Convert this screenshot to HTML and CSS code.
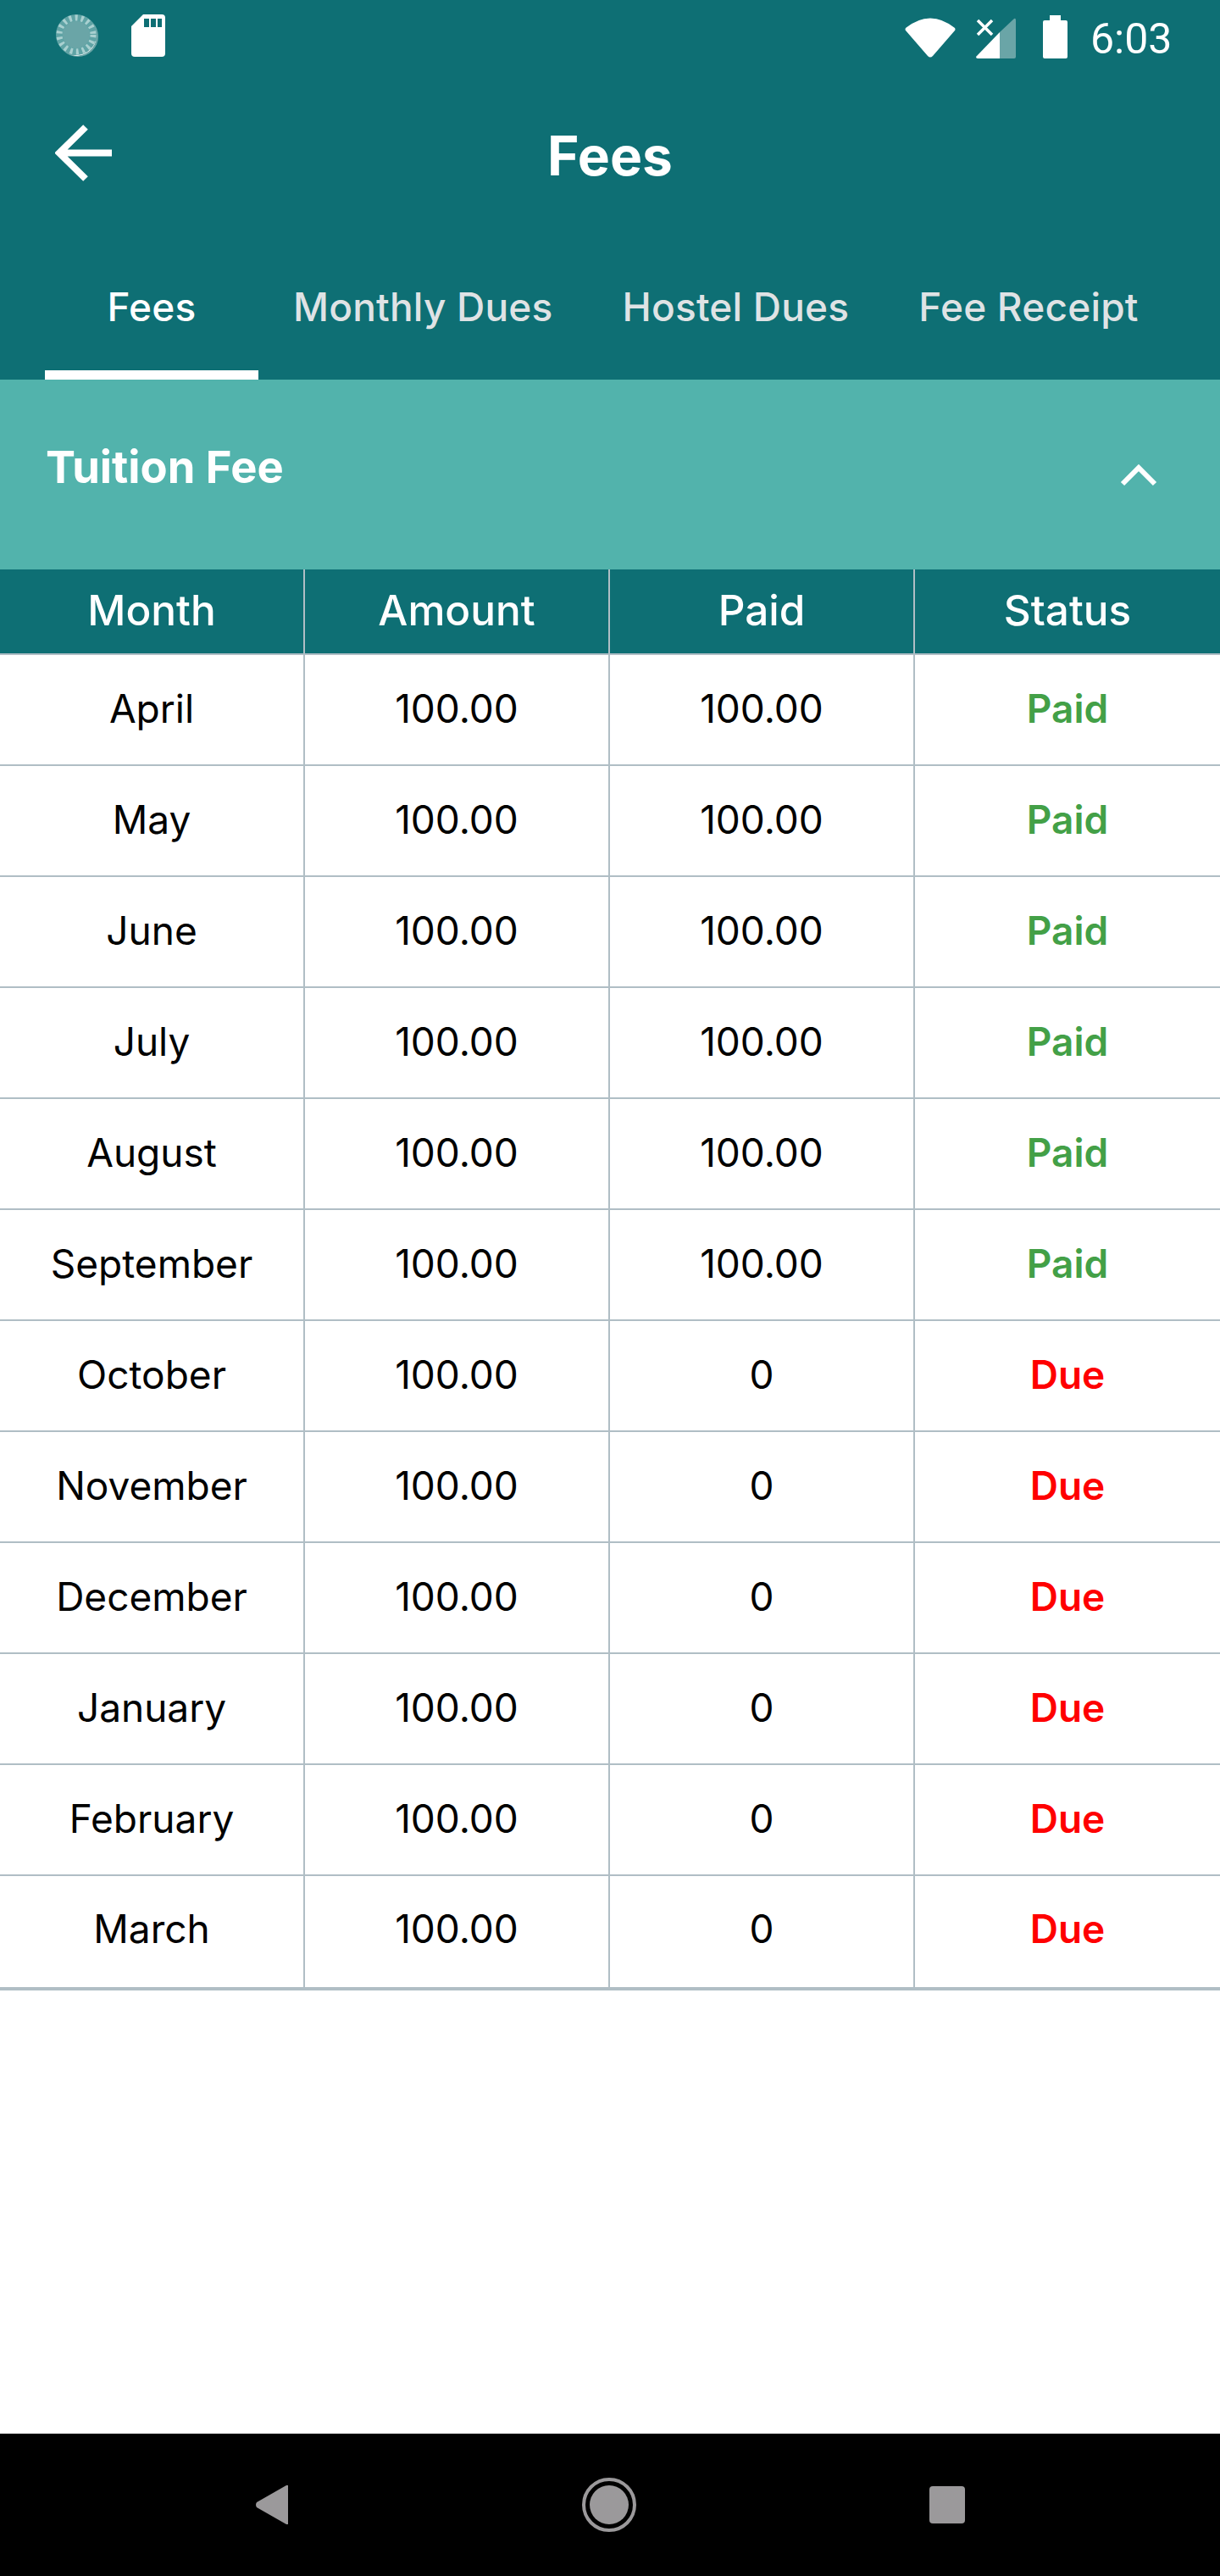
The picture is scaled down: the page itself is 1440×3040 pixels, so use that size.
FILE: index.html
```html
<!DOCTYPE html>
<html lang="en">
<head>
  <meta charset="UTF-8">
  <meta name="viewport" content="width=device-width, initial-scale=1.0">
  <title>Fees</title>
  <link rel="stylesheet" href="styles.css">
</head>
<body>
  <div class="screen">
    <header class="app-header">
      <!-- Status bar -->
      <div class="status-bar">
        <div class="status-left">
          <svg class="icon-sync" viewBox="0 0 50 52" width="50" height="52">
            <circle cx="26" cy="27" r="24" fill="#6aa5a7"/>
            <path d="M47 33 A24 24 0 0 1 18 49 A27 27 0 0 0 46 31 Z" fill="#ffffff"/>
            <circle cx="24" cy="25" r="24" fill="#5fa3a5"/>
            <circle cx="24" cy="25" r="20" fill="none" stroke="#a9d0d0" stroke-width="7" stroke-dasharray="3 4.1"/>
            <circle cx="24" cy="25" r="16" fill="#6aa5a7"/>
          </svg>
          <svg class="icon-sd" viewBox="0 0 40 52" width="40" height="52">
            <path d="M14 1 H36 Q40 1 40 5 V47 Q40 51 36 51 H4 Q0 51 0 47 V15 Z" fill="#ffffff"/>
            <path d="M15 6 h6 v10 h-6 z M23 6 h6 v10 h-6 z M31 6 h5 v10 h-5 z" fill="#0e6f74"/>
          </svg>
        </div>
        <div class="status-right">
          <svg class="icon-wifi" viewBox="0 0 60 52" width="60" height="52">
            <path d="M1 15 Q30 -8 59 15 Q60 17 59 18 L33 48 Q30 51 27 48 L1 18 Q0 17 1 15 Z" fill="#ffffff"/>
          </svg>
          <svg class="icon-signal" viewBox="0 0 47 52" width="47" height="52">
            <path d="M0 49 L28 20 V51 H2 Q0 51 0 49 Z" fill="#ffffff"/>
            <path d="M28 20 L45 4 Q47 3 47 6 V49 Q47 51 45 51 H28 Z" fill="#6aa5a7"/>
            <path d="M2 6 L19 23 M19 6 L2 23" stroke="#ffffff" stroke-width="3.5" fill="none"/>
          </svg>
          <svg class="icon-battery" viewBox="0 0 29 52" width="29" height="52">
            <path d="M8 0 H21 V6 H27 Q29 6 29 8 V49 Q29 51 27 51 H2 Q0 51 0 49 V8 Q0 6 2 6 H8 Z" fill="#ffffff"/>
          </svg>
          <span class="clock">6:03</span>
        </div>
      </div>

      <!-- Toolbar -->
      <div class="toolbar">
        <svg class="back-arrow" viewBox="0 0 68 68" width="68" height="68">
          <path d="M67 33.5 H6 M36 3 L5 33.5 L36 64" fill="none" stroke="#ffffff" stroke-width="8"/>
        </svg>
        <h1 class="toolbar-title">Fees</h1>
      </div>

      <nav class="tabs">
        <a class="tab tab-active">Fees</a>
        <a class="tab">Monthly Dues</a>
        <a class="tab">Hostel Dues</a>
        <a class="tab">Fee Receipt</a>
      </nav>
    </header>

    <div class="section-head">
      <h2>Tuition Fee</h2>
      <svg class="chevron" viewBox="0 0 44 28" width="44" height="28">
        <path d="M3 25 L22 6 L41 25" fill="none" stroke="#ffffff" stroke-width="6"/>
      </svg>
    </div>

    <table class="fee-table">
      <thead>
        <tr><th>Month</th><th>Amount</th><th>Paid</th><th>Status</th></tr>
      </thead>
      <tbody>
        <tr><td>April</td><td>100.00</td><td>100.00</td><td class="paid">Paid</td></tr>
        <tr><td>May</td><td>100.00</td><td>100.00</td><td class="paid">Paid</td></tr>
        <tr><td>June</td><td>100.00</td><td>100.00</td><td class="paid">Paid</td></tr>
        <tr><td>July</td><td>100.00</td><td>100.00</td><td class="paid">Paid</td></tr>
        <tr><td>August</td><td>100.00</td><td>100.00</td><td class="paid">Paid</td></tr>
        <tr><td>September</td><td>100.00</td><td>100.00</td><td class="paid">Paid</td></tr>
        <tr><td>October</td><td>100.00</td><td>0</td><td class="due">Due</td></tr>
        <tr><td>November</td><td>100.00</td><td>0</td><td class="due">Due</td></tr>
        <tr><td>December</td><td>100.00</td><td>0</td><td class="due">Due</td></tr>
        <tr><td>January</td><td>100.00</td><td>0</td><td class="due">Due</td></tr>
        <tr><td>February</td><td>100.00</td><td>0</td><td class="due">Due</td></tr>
        <tr><td>March</td><td>100.00</td><td>0</td><td class="due">Due</td></tr>
      </tbody>
    </table>

    <div class="spacer"></div>

    <!-- Android nav bar -->
    <footer class="nav-bar">
      <svg viewBox="0 0 40 48" width="40" height="48">
        <path d="M39 1 V47 L37 47 L2 27 Q0 24 2 21 L37 1 Z" fill="#9b999b"/>
      </svg>
      <svg viewBox="0 0 64 64" width="64" height="64">
        <circle cx="32" cy="32" r="30" fill="none" stroke="#9b999b" stroke-width="4"/>
        <circle cx="32" cy="32" r="23" fill="#9b999b"/>
      </svg>
      <svg viewBox="0 0 42 44" width="42" height="44">
        <rect x="0" y="0" width="42" height="44" rx="4" fill="#9b999b"/>
      </svg>
    </footer>
  </div>
</body>
</html>
```

FILE: styles.css
```css
* {
  margin: 0;
  padding: 0;
  box-sizing: border-box;
}

body {
  font-family: 'Inter', 'Open Sans', sans-serif;
  background: #ffffff;
  color: #000000;
}

.screen {
  width: 1440px;
  height: 3040px;
  display: flex;
  flex-direction: column;
}

.app-header {
  background: #0e6f74;
  color: #ffffff;
}

.status-bar {
  height: 84px;
  padding: 16px 59px 16px 66px;
  display: flex;
  justify-content: space-between;
  align-items: flex-start;
}

.status-left,
.status-right {
  display: flex;
  align-items: center;
}

.status-left {
  gap: 39px;
}

.icon-wifi { margin-right: 24px; }
.icon-signal { margin-right: 32px; }
.icon-battery { margin-right: 27px; }

.clock {
  font-family: 'Roboto', sans-serif;
  font-size: 50px;
  line-height: 52px;
  width: 94px;
  padding-top: 4px;
}

.toolbar {
  height: 198px;
  display: grid;
  grid-template-columns: 1fr auto 1fr;
  align-items: center;
  padding-left: 65px;
}

.back-arrow {
  margin-top: -4px;
}

.toolbar-title {
  font-size: 64px;
  font-weight: 700;
  margin-left: -65px;
}

.tabs {
  height: 166px;
  padding-left: 53px;
  display: flex;
}

.tab {
  padding: 5px 41px 0;
  height: 166px;
  display: flex;
  align-items: center;
  justify-content: center;
  font-size: 46px;
  font-weight: 500;
  letter-spacing: .2px;
  color: #dfe3e5;
  border-bottom: 11px solid transparent;
  white-space: nowrap;
}

.tab-active {
  width: 252px;
  color: #ffffff;
  border-bottom-color: #ffffff;
}

.section-head {
  height: 224px;
  background: #52b3ac;
  color: #ffffff;
  padding: 0 50px 0 54px;
  display: flex;
  justify-content: space-between;
  align-items: center;
}

.section-head h2 {
  font-size: 52.5px;
  font-weight: 700;
  margin-top: -18px;
}

.chevron {
  margin: 0 24px 0 0;
}

.fee-table {
  width: 1440px;
  table-layout: fixed;
  border-collapse: separate;
  border-spacing: 0;
  text-align: center;
}

.fee-table th {
  height: 101px;
  padding-bottom: 4px;
  background: #0e6f74;
  color: #ffffff;
  font-size: 49.5px;
  font-weight: 500;
  border-right: 2px solid #b0bec5;
  border-bottom: 2px solid #b0bec5;
}

.fee-table td {
  height: 131px;
  padding-bottom: 4px;
  font-size: 46px;
  border-right: 2px solid #b0bec5;
  border-bottom: 2px solid #b0bec5;
}

.fee-table th:last-child,
.fee-table td:last-child {
  border-right: none;
}

.fee-table tbody tr:last-child td {
  height: 135px;
  padding-bottom: 8px;
  border-bottom-width: 4px;
}

.fee-table td.paid {
  color: #43a047;
  font-weight: 600;
}

.fee-table td.due {
  color: #ff0000;
  font-weight: 600;
}

.spacer {
  flex: 1;
}

.nav-bar {
  height: 168px;
  background: #000000;
  padding: 0 301px 0 301px;
  display: flex;
  justify-content: space-between;
  align-items: center;
}
```
